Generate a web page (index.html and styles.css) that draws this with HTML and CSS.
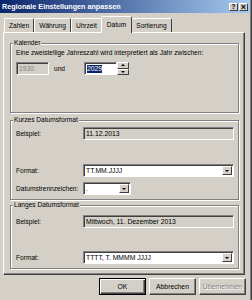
FILE: index.html
```html
<!DOCTYPE html>
<html lang="de">
  <head>
    <meta charset="UTF-8" />
    <title>Regionale Einstellungen anpassen</title>
    <link rel="stylesheet" href="styles.css">
  </head>
  <body>
    <div class="window">
      <div class="titlebar">
        <span class="title">Regionale Einstellungen anpassen</span>
        <span class="caption-buttons">
          <span class="caption-btn">?</span>
          <span class="caption-btn close">×</span>
        </span>
      </div>

      <div class="tabs">
        <span class="tab">Zahlen</span>
        <span class="tab">Währung</span>
        <span class="tab">Uhrzeit</span>
        <span class="tab active">Datum</span>
        <span class="tab">Sortierung</span>
      </div>

      <div class="panel">
        <div class="group calendar">
          <span class="legend">Kalender</span>
          <p class="hint">Eine zweistellige Jahreszahl wird interpretiert als Jahr zwischen:</p>
          <div class="years">
            <span class="field disabled year">1930</span>
            <span class="and">und</span>
            <span class="field year"><span class="selection">2029</span></span>
            <span class="spin">
              <span class="spin-btn"><span class="arrow up"></span></span>
              <span class="spin-btn"><span class="arrow"></span></span>
            </span>
          </div>
        </div>

        <div class="group short">
          <span class="legend">Kurzes Datumsformat</span>
          <div class="row sample-row">
            <span class="label">Beispiel:</span>
            <span class="field sample">11.12.2013</span>
          </div>
          <div class="row format-row">
            <span class="label">Format:</span>
            <span class="field combo wide">
              <span class="value">TT.MM.JJJJ</span>
              <span class="drop"><span class="arrow"></span></span>
            </span>
          </div>
          <div class="row separator-row">
            <span class="label">Datumstrennzeichen:</span>
            <span class="field combo narrow">
              <span class="value">.</span>
              <span class="drop"><span class="arrow"></span></span>
            </span>
          </div>
        </div>

        <div class="group long">
          <span class="legend">Langes Datumsformat</span>
          <div class="row sample-row">
            <span class="label">Beispiel:</span>
            <span class="field sample">Mittwoch, 11. Dezember 2013</span>
          </div>
          <div class="row long-format-row">
            <span class="label">Format:</span>
            <span class="field combo wide">
              <span class="value">TTTT, T. MMMM JJJJ</span>
              <span class="drop"><span class="arrow"></span></span>
            </span>
          </div>
        </div>
      </div>

      <div class="buttons">
        <span class="btn default">OK</span>
        <span class="btn">Abbrechen</span>
        <span class="btn disabled">Übernehmen</span>
      </div>
    </div>
  </body>
</html>
```

FILE: styles.css
```css
body {
  margin: 0;
  background: #d4d0c8;
  font-family: "Liberation Sans", Arial, sans-serif;
  font-size: 6.6px;
  color: #000;
}

.window {
  width: 252px;
  height: 300px;
  box-sizing: border-box;
  padding-right: 2px;
  background: #d4d0c8;
  box-shadow: inset -1px 0 #404040, inset -2px 0 #808080; /* right frame */
  display: flex;
  flex-direction: column;
}

/* title bar */
.titlebar {
  height: 13px;
  display: flex;
  align-items: center;
  justify-content: space-between;
  padding: 0 2px 0 2px;
  background: linear-gradient(to right, #0a246a, #a6caf0);
}

.title {
  color: #fff;
  font-weight: bold;
  font-size: 7.2px;
}

.caption-buttons {
  display: flex;
  gap: 1px;
}

.caption-btn {
  width: 9px;
  height: 8px;
  box-sizing: border-box;
  background: #d4d0c8;
  border: 1px solid;
  border-color: #fff #404040 #404040 #fff;
  font-size: 7px;
  font-weight: bold;
  line-height: 6px;
  text-align: center;
}

.caption-btn.close {
  font-size: 9px;
}

/* tabs */
.tabs {
  height: 19px;
  display: flex;
  align-items: flex-end;
  padding-left: 4px;
}

.tab {
  height: 14px;
  box-sizing: border-box;
  padding: 0 4px;
  border: 1px solid;
  border-bottom: none;
  border-color: #fff #404040 transparent #fff;
  border-radius: 2px 2px 0 0;
  display: flex;
  align-items: center;
}

.tab.active {
  height: 17px;
  margin: 0 -1px -1px -1px;
  padding: 0 5px 2px 5px;
  background: #d4d0c8;
  position: relative;
  z-index: 1;
}

/* tab panel */
.panel {
  margin-left: 3px;
  width: 242px;
  height: 243px;
  box-sizing: border-box;
  border: 1px solid;
  border-color: #fff #404040 #404040 #fff;
  box-shadow: inset -1px -1px #808080;
  padding: 10px 5px 5px 6px;
  display: flex;
  flex-direction: column;
}

.group {
  border: 1px solid #808080;
  box-shadow: inset 1px 1px #fff, 1px 1px #fff; /* etched */
  padding: 0 4px 0 5px;
  display: flex;
  flex-direction: column;
  box-sizing: border-box;
}

.group.calendar { height: 70px; }
.group.short { height: 80px; margin-top: 7px; }
.group.long { height: 64px; margin-top: 5px; }

.legend {
  align-self: flex-start;
  margin: -5px 0 0 -3px;
  padding: 0 1px;
  line-height: 8px;
  background: #d4d0c8;
}

.hint {
  margin: 2px 0 0;
  line-height: 8px;
}

.years {
  margin-top: 5px;
  display: flex;
  align-items: center;
}

.and {
  width: 35px;
  padding-left: 5px;
  box-sizing: border-box;
}

/* sunken fields */
.field {
  height: 13px;
  box-sizing: border-box;
  border: 1px solid;
  border-color: #808080 #fff #fff #808080;
  box-shadow: inset 1px 1px #404040;
  background: #fff;
  display: flex;
  align-items: center;
  padding-left: 2px;
  font-size: 6.8px;
}

.field.year {
  width: 33px;
}

.field.disabled,
.field.sample {
  background: #d4d0c8;
}

.field.disabled {
  color: #808080;
}

.selection {
  background: #0a246a;
  color: #fff;
  line-height: 8px;
}

.spin {
  width: 12px;
  height: 13px;
  display: flex;
  flex-direction: column;
}

.spin-btn {
  flex: 1;
  border: 1px solid;
  border-color: #fff #404040 #404040 #fff;
  display: flex;
  align-items: center;
  justify-content: center;
}

.arrow {
  width: 0;
  height: 0;
  border-left: 2px solid transparent;
  border-right: 2px solid transparent;
  border-top: 2px solid #000;
}

.arrow.up {
  border-top: none;
  border-bottom: 2px solid #000;
}

.row {
  display: flex;
  align-items: center;
}

.label {
  width: 67px;
  flex: none;
}

.sample-row { margin-top: 3px; }
.short .format-row { margin-top: 24px; }
.separator-row { margin-top: 5px; }
.long .sample-row { margin-top: 6px; }
.long-format-row { margin-top: 23px; }

.field.sample,
.field.wide {
  width: 154px;
}

.field.narrow {
  width: 48px;
}

.combo {
  justify-content: space-between;
  padding-right: 1px;
}

.drop {
  width: 10px;
  height: 9px;
  box-sizing: border-box;
  background: #d4d0c8;
  border: 1px solid;
  border-color: #fff #404040 #404040 #fff;
  display: flex;
  align-items: center;
  justify-content: center;
}

/* dialog buttons */
.buttons {
  margin-top: 3px;
  padding-right: 4px;
  display: flex;
  justify-content: flex-end;
  gap: 3px;
}

.btn {
  width: 47px;
  height: 17px;
  box-sizing: border-box;
  border: 1px solid;
  border-color: #fff #404040 #404040 #fff;
  box-shadow: inset -1px -1px #808080;
  display: flex;
  align-items: center;
  justify-content: center;
  font-size: 6.8px;
}

.btn.default {
  border-color: #000;
  box-shadow: inset 1px 1px #fff, inset -1px -1px #404040, inset -2px -2px #808080;
}

.btn.disabled {
  color: #808080;
  text-shadow: 1px 1px #fff;
}
```
